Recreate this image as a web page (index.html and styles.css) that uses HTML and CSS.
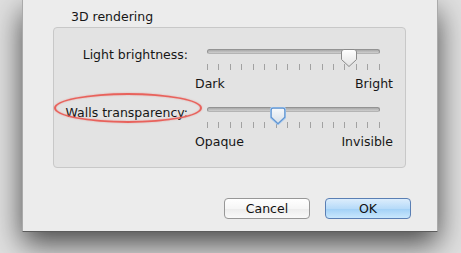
FILE: index.html
```html
<!DOCTYPE html>
<html lang="en">
<head>
    <meta charset="UTF-8">
    <meta name="viewport" content="width=device-width, initial-scale=1.0">
    <title>3D rendering</title>
    <link rel="stylesheet" href="styles.css">
</head>
<body>
    <div class="screen">
        <div class="window">
            <div class="section-title">3D rendering</div>

            <div class="group">
                <label class="setting-label">Light brightness:</label>
                <div class="slider">
                    <div class="rail">
                        <div class="track"></div>
                        <svg class="thumb" style="--value: 82%" width="16" height="18" viewBox="0 0 16 18">
                            <defs>
                                <linearGradient id="thumbFill" x1="0" y1="0" x2="0" y2="1">
                                    <stop offset="0" stop-color="#ffffff"/>
                                    <stop offset="1" stop-color="#e2e2e2"/>
                                </linearGradient>
                            </defs>
                            <path d="M3,0.5 H13 Q15.5,0.5 15.5,3 V10.5 L8,17.5 L0.5,10.5 V3 Q0.5,0.5 3,0.5 Z"
                                  fill="url(#thumbFill)" stroke="#8a8a8a"/>
                        </svg>
                    </div>
                    <div class="ticks">
                        <span></span><span></span><span></span><span></span>
                        <span></span><span></span><span></span><span></span>
                        <span></span><span></span><span></span><span></span>
                        <span></span><span></span><span></span><span></span>
                    </div>
                    <div class="ends"><span>Dark</span><span>Bright</span></div>
                </div>

                <label class="setting-label">Walls transparency:</label>
                <div class="slider">
                    <div class="rail">
                        <div class="track"></div>
                        <svg class="thumb" style="--value: 41%" width="16" height="18" viewBox="0 0 16 18">
                            <defs>
                                <linearGradient id="thumbFocus" x1="0" y1="0" x2="0" y2="1">
                                    <stop offset="0" stop-color="#f7f9fb"/>
                                    <stop offset="1" stop-color="#d6dfe8"/>
                                </linearGradient>
                            </defs>
                            <path d="M3,0.5 H13 Q15.5,0.5 15.5,3 V10.5 L8,17.5 L0.5,10.5 V3 Q0.5,0.5 3,0.5 Z"
                                  fill="none" stroke="#a9cbef" stroke-width="1.6"/>
                            <path d="M3.2,1.2 H12.8 Q14.8,1.2 14.8,3.2 V10.2 L8,16.6 L1.2,10.2 V3.2 Q1.2,1.2 3.2,1.2 Z"
                                  fill="url(#thumbFocus)" stroke="#5f94d2" stroke-width="1.2"/>
                        </svg>
                    </div>
                    <div class="ticks">
                        <span></span><span></span><span></span><span></span>
                        <span></span><span></span><span></span><span></span>
                        <span></span><span></span><span></span><span></span>
                        <span></span><span></span><span></span><span></span>
                    </div>
                    <div class="ends"><span>Opaque</span><span>Invisible</span></div>
                </div>
            </div>

            <div class="buttons">
                <button class="button">Cancel</button>
                <button class="button default">OK</button>
            </div>

            <div class="highlight"></div>
        </div>
    </div>
</body>
</html>
```

FILE: styles.css
```css
body {
    margin: 0;
    background: #e0e0e0;
    font-family: "DejaVu Sans", Verdana, sans-serif;
    font-size: 12.5px;
    color: #161616;
    overflow: hidden;
}
.screen {
    height: 253px;
    padding-left: 22px;
}
.window {
    position: relative;
    width: 416px;
    height: 232px;
    box-sizing: border-box;
    padding-top: 9px;
    background: #ececec;
    border: 1px solid rgba(0, 0, 0, 0.28);
    border-top: none;
    border-bottom-color: #5c5c5c;
    box-shadow: 0 12px 28px rgba(0, 0, 0, 0.68);
}
.section-title {
    margin-left: 48px;
    line-height: 15px;
}
.group {
    display: grid;
    grid-template-columns: 134px 198px;
    column-gap: 7px;
    row-gap: 12px;
    width: 353px;
    box-sizing: border-box;
    margin: 3px 0 0 30px;
    padding: 17px 12px 18px 0;
    background: #e3e3e3;
    border: 1px solid #c8c8c8;
    border-radius: 4px;
}
.setting-label {
    padding-top: 2px;
    line-height: 15px;
    text-align: right;
}
.rail {
    position: relative;
    height: 9px;
    margin: 0 13px 0 12px;
}
.track {
    height: 5px;
    margin-top: 4px;
    box-sizing: border-box;
    border: 1px solid #939393;
    border-bottom-color: #b4b4b4;
    border-radius: 3px;
    background: linear-gradient(#a9a9a9, #cfcfcf);
}
.thumb {
    position: absolute;
    top: 0;
    left: calc(var(--value) - 8px);
    display: block;
}
.ticks {
    display: flex;
    justify-content: space-between;
    height: 6px;
    margin: 6px 13px 0 12px;
}
.ticks span {
    width: 1px;
    background: #a2a2a2;
}
.ends {
    display: flex;
    justify-content: space-between;
    margin-top: 6px;
    line-height: 15px;
}
.buttons {
    display: flex;
    justify-content: flex-end;
    gap: 15px;
    margin-top: 30px;
    padding-right: 26px;
}
.button {
    width: 86px;
    height: 21px;
    padding: 0;
    font-family: inherit;
    font-size: 12.5px;
    color: #111;
    border: 1px solid #979797;
    border-radius: 4px;
    background: linear-gradient(#ffffff, #f6f6f6 50%, #ececec 51%, #f9f9f9);
}
.button.default {
    border-color: #5a7fb4;
    background: linear-gradient(#dcedfc, #b7dbf9 50%, #a1d0f6 51%, #c9e7fd);
}
.highlight {
    position: absolute;
    left: 31px;
    top: 93px;
    width: 148px;
    height: 30px;
    box-sizing: border-box;
    border: 2.5px solid #e8625c;
    border-radius: 50%;
    box-shadow: 0 0 1.5px rgba(232, 98, 92, 0.6), inset 0 0 1.5px rgba(232, 98, 92, 0.6);
}
```
